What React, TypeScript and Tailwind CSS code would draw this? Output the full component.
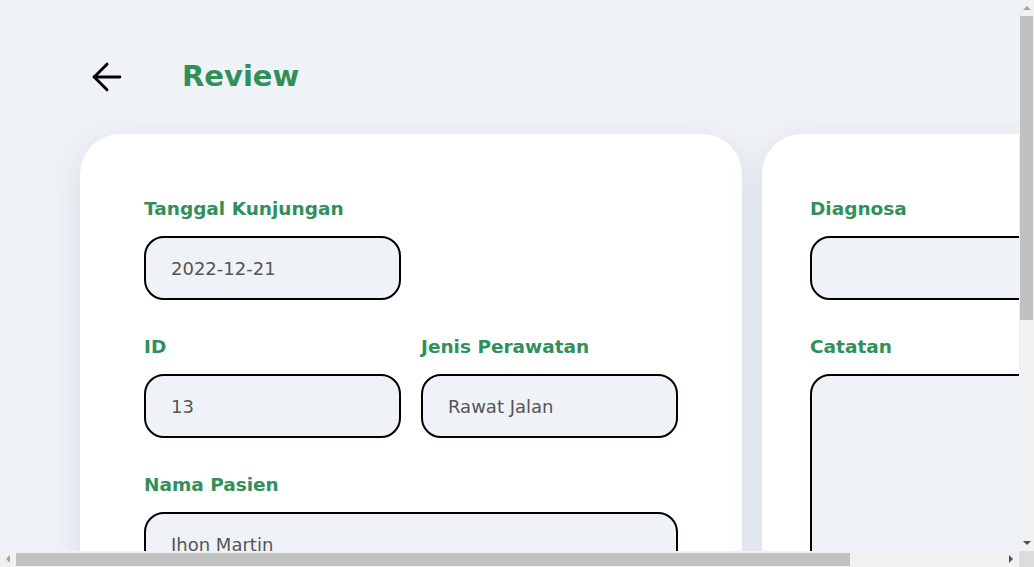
import { ArrowLeft } from "lucide-react";

const font = { fontFamily: "'DejaVu Sans', 'Noto Sans', sans-serif" };

function Field({
  label,
  value,
  className = "",
}: {
  label: string;
  value?: string;
  className?: string;
}) {
  return (
    <div className={`flex flex-col ${className}`}>
      <label className="text-[18.5px] leading-[28px] font-bold text-[#31905a] mb-[13px]">
        {label}
      </label>
      <div className="h-[64px] rounded-[20px] border-2 border-black bg-[#eff2f6] px-[25px] flex items-center text-[18px] text-[#555]">
        {value}
      </div>
    </div>
  );
}

// classic browser scrollbars, as they appear in the screenshot
function VScroll() {
  return (
    <div className="bg-[#f1f1f1] flex flex-col items-center">
      <div className="h-[16px] flex items-center justify-center">
        <div className="w-0 h-0 border-x-[4px] border-x-transparent border-b-[4px] border-b-[#a3a3a3]" />
      </div>
      <div className="w-[13px] h-[304px] bg-[#c1c1c1]" />
      <div className="flex-1" />
      <div className="h-[16px] flex items-center justify-center">
        <div className="w-0 h-0 border-x-[4px] border-x-transparent border-t-[4px] border-t-[#505050]" />
      </div>
    </div>
  );
}

function HScroll() {
  return (
    <div className="bg-[#f1f1f1] flex items-center">
      <div className="w-[16px] flex items-center justify-center">
        <div className="w-0 h-0 border-y-[4px] border-y-transparent border-r-[4px] border-r-[#a3a3a3]" />
      </div>
      <div className="h-[13px] w-[834px] bg-[#c1c1c1]" />
      <div className="flex-1" />
      <div className="w-[16px] flex items-center justify-center">
        <div className="w-0 h-0 border-y-[4px] border-y-transparent border-l-[4px] border-l-[#505050]" />
      </div>
    </div>
  );
}

export default function App() {
  return (
    <div
      className="w-screen h-screen grid grid-cols-[1fr_15px] grid-rows-[1fr_16px] overflow-hidden"
      style={font}
    >
      <div className="overflow-hidden bg-[#eff2f6]">
        <div className="w-[1203px] min-h-[934px] pl-[80px] pr-[80px] pt-[50px] pb-[60px]">
          <div className="flex items-center h-[54px] mb-[30px]">
            <button className="w-[54px] h-[54px] flex items-center justify-center text-black">
              <ArrowLeft size={44} strokeWidth={1.6} />
            </button>
            <h1 className="ml-[48px] text-[29px] font-bold text-[#31905a]">Review</h1>
          </div>

          <div className="flex gap-5 items-start">
            <div className="w-[662px] min-h-[740px] shrink-0 rounded-[40px] bg-white shadow-[0_10px_30px_rgba(148,163,184,0.25)] px-16 pt-[61px] pb-16 flex flex-col gap-[33px]">
              <div className="grid grid-cols-2 gap-5">
                <Field label="Tanggal Kunjungan" value="2022-12-21" />
              </div>
              <div className="grid grid-cols-2 gap-5">
                <Field label="ID" value="13" />
                <Field label="Jenis Perawatan" value="Rawat Jalan" />
              </div>
              <Field label="Nama Pasien" value="Jhon Martin" />
            </div>

            <div className="w-[361px] min-h-[740px] shrink-0 rounded-[40px] bg-white shadow-[0_10px_30px_rgba(148,163,184,0.25)] px-12 pt-[61px] pb-16 flex flex-col gap-[33px]">
              <Field label="Diagnosa" />
              <div className="flex flex-col">
                <label className="text-[18.5px] leading-[28px] font-bold text-[#31905a] mb-[13px]">
                  Catatan
                </label>
                <textarea className="h-[260px] rounded-[20px] border-2 border-black bg-[#eff2f6] px-[25px] py-4 text-[18px] text-[#555] resize-none outline-none" />
              </div>
            </div>
          </div>
        </div>
      </div>
      <VScroll />
      <HScroll />
      <div className="bg-[#dcdcdc]" />
    </div>
  );
}
